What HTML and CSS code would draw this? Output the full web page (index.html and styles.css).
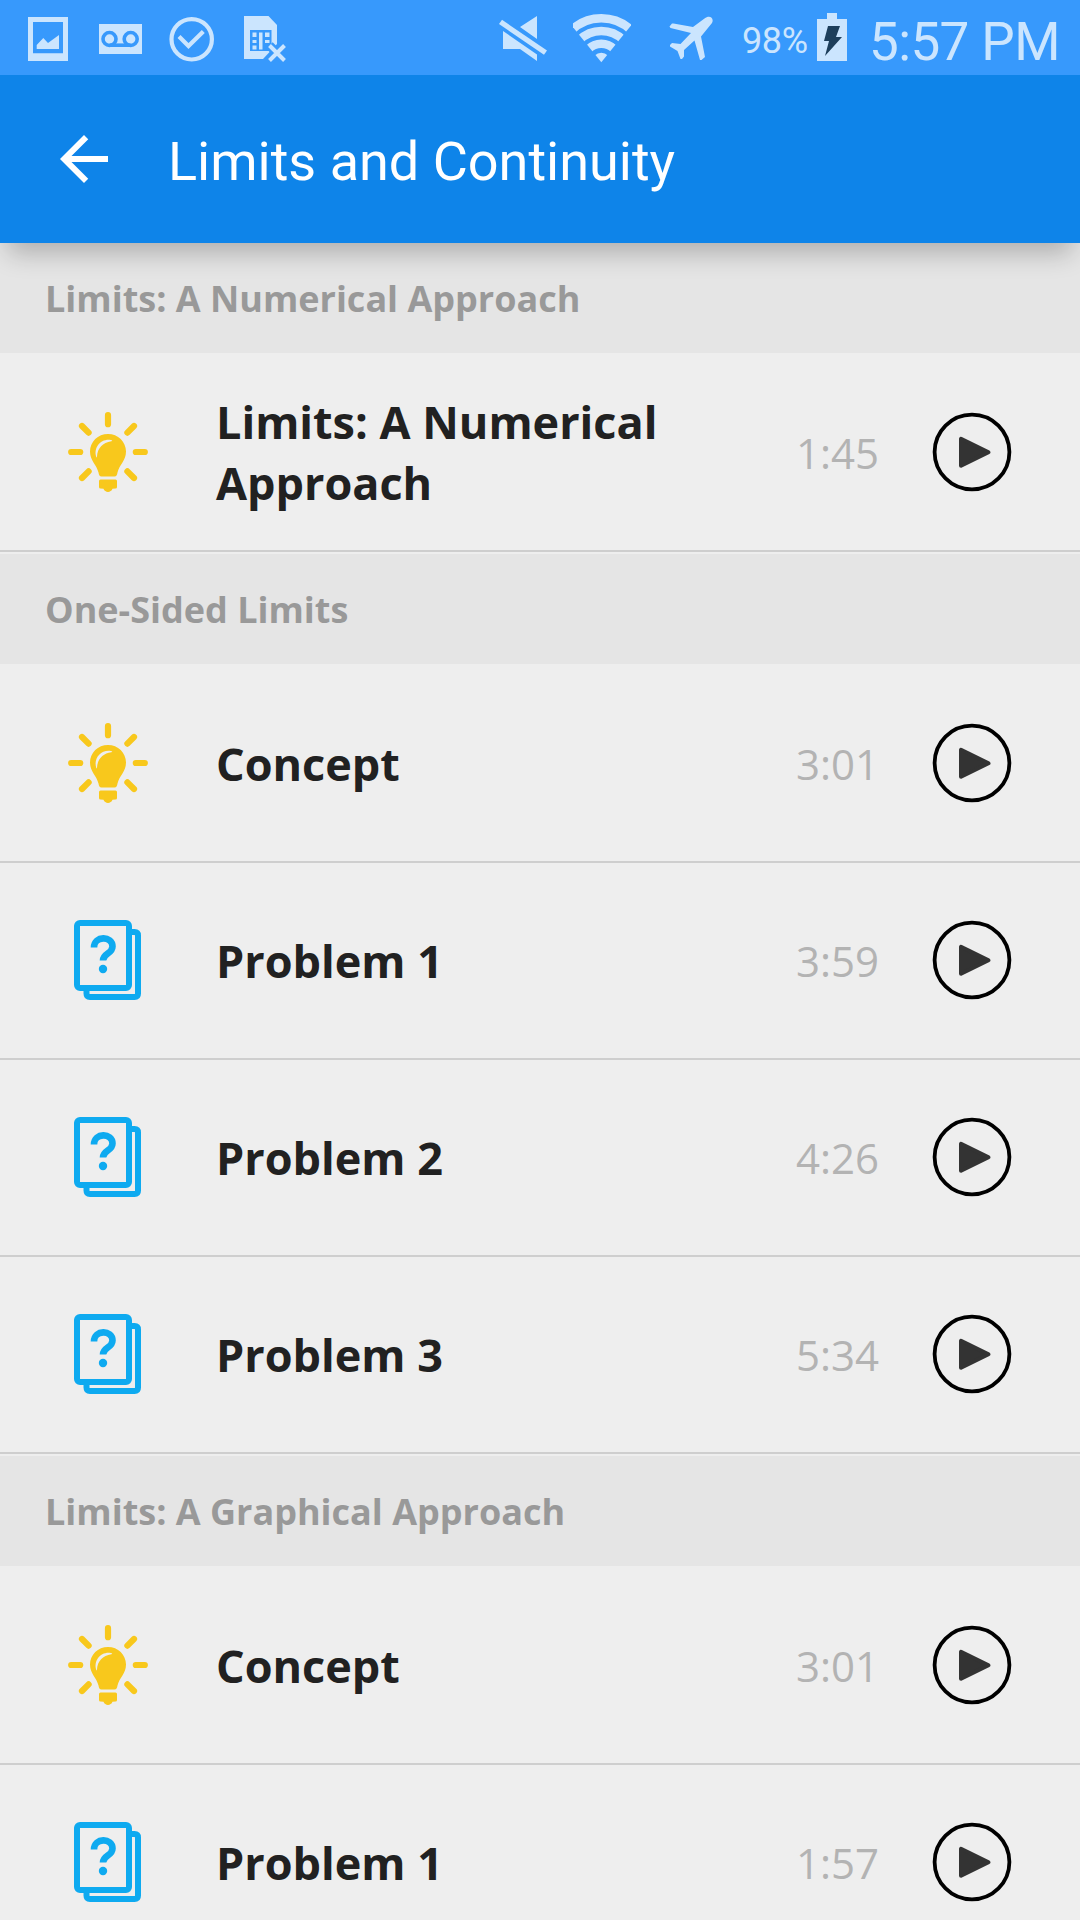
FILE: index.html
```html
<!DOCTYPE html>
<html lang="en">
<head>
    <meta charset="UTF-8">
    <title>Limits and Continuity</title>
    <link rel="stylesheet" href="styles.css">
</head>
<body>
<!-- shared icons -->
<svg class="defs">
    <symbol id="bulb" viewBox="0 0 80 80">
        <g stroke="#f8c81c" stroke-width="6.2" stroke-linecap="round">
            <path d="M40 3.2v9M3.2 40h9M67.8 40h9M14 14l6.600 6.600M66 14l-6.600 6.600M14 66l6.600-6.600M66 66l-6.600-6.600"/>
        </g>
        <path fill="#f8c81c" d="M40 22c-10 0-18 7.800-18 17.500 0 9 6.500 13 8.500 21 .5 2.500 1 4 3 4h13c2 0 2.500-1.500 3-4 2-8 8.500-12 8.500-21C58 29.800 50 22 40 22z"/>
        <path fill="#eee" d="M28.300 45c-3-9 4-18.500 14.500-17 1.500.3 2 1 .5 1.300-8.500 1.200-14 7-14.300 15.400 0 .8-.4 1-.7.3z"/>
        <path fill="#f8c81c" d="M32.500 67.500h15q1.500 0 1.500 1.500v6q0 1.500-1.500 1.500l-3 .3c-1.500 4.200-7.500 4.200-9 0l-3-.3q-1.500 0-1.500-1.500v-6q0-1.500 1.500-1.500z"/>
    </symbol>
    <symbol id="cards" viewBox="0 0 80 80">
        <g fill="none" stroke="#0eaaf0" stroke-width="6">
            <rect x="9" y="3" width="52" height="65" rx="3"/>
            <path d="M61 12h5.500q3.500 0 3.500 3.500v58q0 3.500-3.500 3.500h-44.500q-3.500 0-3.500-3.500v-5.500"/>
            <path stroke-width="6.600" d="M26 27.500c0-12 18.500-12 18.500-1 0 7.500-9.500 6.500-9.500 14"/>
        </g>
        <circle cx="35" cy="49" r="4.200" fill="#0eaaf0"/>
    </symbol>
    <symbol id="play" viewBox="0 0 80 80">
        <circle cx="40" cy="40" r="37.400" fill="none" stroke="#000" stroke-width="3.800"/>
        <path fill="#333" stroke="#333" stroke-width="4" stroke-linejoin="round" d="M29 26.800v27l27.500-13.500z"/>
    </symbol>
</svg>

<div class="status">
    <svg class="image" width="40" height="44" viewBox="28 17 40 44">
        <path fill-rule="evenodd" d="M28 17h40v44h-40zM33 22v31.300h30v-31.300z"/>
        <path d="M36.700 49v-4l6.600-7 4.700 5 11-8v14z"/>
    </svg>
    <svg class="voicemail" width="43" height="30" viewBox="99 24 43 30">
        <path d="M99 24h43v30h-43z"/>
        <g class="cut">
            <circle cx="109.500" cy="39" r="6.500"/>
            <circle cx="130.700" cy="39" r="6.500"/>
            <path d="M109.500 45.200h21.200"/>
        </g>
    </svg>
    <svg class="check" width="46" height="46" viewBox="169 16 46 46">
        <circle cx="191.700" cy="39.300" r="20.200"/>
        <path d="M179 36.500l9.500 9.500 14.800-14.500"/>
    </svg>
    <svg class="sim" width="43" height="47" viewBox="244 16 43 47">
        <path d="M244 16h24.500l8.500 9v19l-14 15h-19z"/>
        <path class="hole" d="M250 30h21.500v21h-21.500z"/>
        <path d="M252.500 32.500h4v4.500h-4zM252.500 40h4v3h-4zM252.500 45.500h4v4h-4zM259 32.500h3.500v17h-3.500zM265 32.500h4.500v4.500h-4.500zM265 40h4.500v3h-4.500z"/>
        <path class="edge" d="M269.500 45.500l15 15M284.500 45.500l-15 15"/>
        <path class="cross" d="M269.500 45.500l15 15M284.500 45.500l-15 15"/>
    </svg>
    <svg class="mute" width="48" height="46" viewBox="499 16 48 46">
        <path d="M520 27l17-11v23zM503 31l34 23.500v6.500l-17-12h-17z"/>
        <path d="M502 19.800l45 30.700-3 4.300-45-30.700z"/>
    </svg>
    <svg class="wifi" width="58" height="49" viewBox="573 14 58 49">
        <clipPath id="wedge"><path d="M601.300 62.300l-42-52h84z"/></clipPath>
        <g clip-path="url(#wedge)">
            <circle cx="601.300" cy="62" r="43.700"/>
            <circle cx="601.300" cy="62" r="31"/>
            <circle cx="601.300" cy="62" r="18.200"/>
            <circle class="dot" cx="601.300" cy="62" r="9.300"/>
        </g>
    </svg>
    <svg class="plane" width="46" height="44" viewBox="668 16 46 44">
        <path d="M669.500 26.500l2.500-3h1.500l19.500 3.500 11.500-8.500c5-4 10-.5 7.500 4.500l-11 13.500 4 20.500-3.500 3h-1.500l-5.500-19.500-10.500 9.500v6.500l-2 2.500h-1.500l-3-8-7.500-4.500v-1.500l2-2 8.500 1 10.500-11-20.500-5z"/>
    </svg>
    <span class="percent">98%</span>
    <svg class="battery" width="30" height="48" viewBox="817 13 30 48">
        <path d="M827 13h10v6h10v42h-30v-42h10z"/>
        <path class="bolt" d="M828 26h12l-4 11h6l-17 19 4-15h-5z"/>
    </svg>
    <span class="clock">5:57 PM</span>
</div>

<div class="header">
    <svg class="back" width="72" height="72" viewBox="0 0 24 24">
        <path d="M20 11H7.830l5.590-5.590L12 4l-8 8 8 8 1.410-1.410L7.830 13H20v-2z"/>
    </svg>
    <h1>Limits and Continuity</h1>
</div>

<h2>Limits: A Numerical Approach</h2>
<ul>
    <li><svg class="icon"><use href="#bulb"/></svg><p>Limits: A Numerical Approach</p><span class="time">1:45</span><svg class="icon"><use href="#play"/></svg></li>
</ul>
<h2>One-Sided Limits</h2>
<ul>
    <li><svg class="icon"><use href="#bulb"/></svg><p>Concept</p><span class="time">3:01</span><svg class="icon"><use href="#play"/></svg></li>
    <li><svg class="icon"><use href="#cards"/></svg><p>Problem 1</p><span class="time">3:59</span><svg class="icon"><use href="#play"/></svg></li>
    <li><svg class="icon"><use href="#cards"/></svg><p>Problem 2</p><span class="time">4:26</span><svg class="icon"><use href="#play"/></svg></li>
    <li><svg class="icon"><use href="#cards"/></svg><p>Problem 3</p><span class="time">5:34</span><svg class="icon"><use href="#play"/></svg></li>
</ul>
<h2>Limits: A Graphical Approach</h2>
<ul>
    <li><svg class="icon"><use href="#bulb"/></svg><p>Concept</p><span class="time">3:01</span><svg class="icon"><use href="#play"/></svg></li>
    <li><svg class="icon"><use href="#cards"/></svg><p>Problem 1</p><span class="time">1:57</span><svg class="icon"><use href="#play"/></svg></li>
</ul>
</body>
</html>
```
FILE: styles.css
```css
* {
    margin: 0;
    padding: 0;
    box-sizing: border-box;
}

body {
    width: 1080px;
    height: 1920px;
    overflow: hidden;
    background-color: #eee;
    font-family: "Open Sans", "Noto Sans", sans-serif;
}

ul {
    list-style: none;
}

svg {
    display: block;
    flex: none;
}

.defs {
    display: none;
}

/* status bar */
.status {
    display: flex;
    height: 75px;
    padding-left: 28px;
    background-color: #3799fc;
    color: #cbe5fe;
    fill: #cbe5fe;
    font-family: Roboto, sans-serif;
    white-space: nowrap;
}

.image {
    margin-top: 17px;
}

.voicemail {
    margin: 24px 0 0 31px;
}

.cut {
    fill: none;
    stroke: #3799fc;
    stroke-width: 3.6px;
}

.check {
    margin: 16px 0 0 27px;
    fill: none;
    stroke: #cbe5fe;
    stroke-width: 4.2px;
}

.sim {
    margin: 16px 0 0 29px;
}

.hole {
    fill: #3799fc;
}

.edge {
    stroke: #3799fc;
    stroke-width: 9px;
}

.cross {
    stroke: #cbe5fe;
    stroke-width: 4px;
}

.mute {
    margin: 16px 0 0 212px;
}

.wifi {
    margin: 14px 0 0 26px;
    fill: none;
    stroke: #cbe5fe;
    stroke-width: 8.6px;
}

.dot {
    fill: #cbe5fe;
    stroke: none;
}

.plane {
    margin: 16px 0 0 37px;
}

.percent {
    width: 75px;
    margin: 20px 0 0 28px;
    font-size: 36px;
    letter-spacing: -.4px;
    line-height: 42px;
}

.battery {
    margin-top: 13px;
}

.bolt {
    fill: #1d3f5c;
}

.clock {
    margin: 10px 0 0 22px;
    font-size: 53px;
    letter-spacing: -.6px;
    line-height: 64px;
}

/* title bar */
.header {
    position: relative;
    display: flex;
    align-items: center;
    height: 168px;
    padding-left: 48px;
    background-color: #0e84e9;
    box-shadow: 0 18px 24px -8px rgba(0, 0, 0, .24);
    color: #fff;
}

.back {
    fill: #fff;
}

h1 {
    margin: 5px 0 0 48px;
    font: 400 54px/64px Roboto, sans-serif;
}

/* lessons */
h2 {
    height: 110px;
    padding-left: 45px;
    background-color: #e5e5e5;
    color: #999;
    font-size: 36px;
    line-height: 112px;
}

ul {
    padding: 2px 0;
}

li {
    display: flex;
    align-items: center;
    height: 197px;
    padding-left: 68px;
    border-bottom: 2px solid #cecece;
}

.icon {
    width: 80px;
    height: 80px;
    margin-bottom: 1px;
}

li p {
    width: 510px;
    margin: 0 0 1px 68px;
    color: #212121;
    font-size: 45px;
    font-weight: bold;
    line-height: 61px;
}

.time {
    width: 136px;
    margin-left: 70px;
    color: #b3b3b3;
    font-size: 42px;
}
```
